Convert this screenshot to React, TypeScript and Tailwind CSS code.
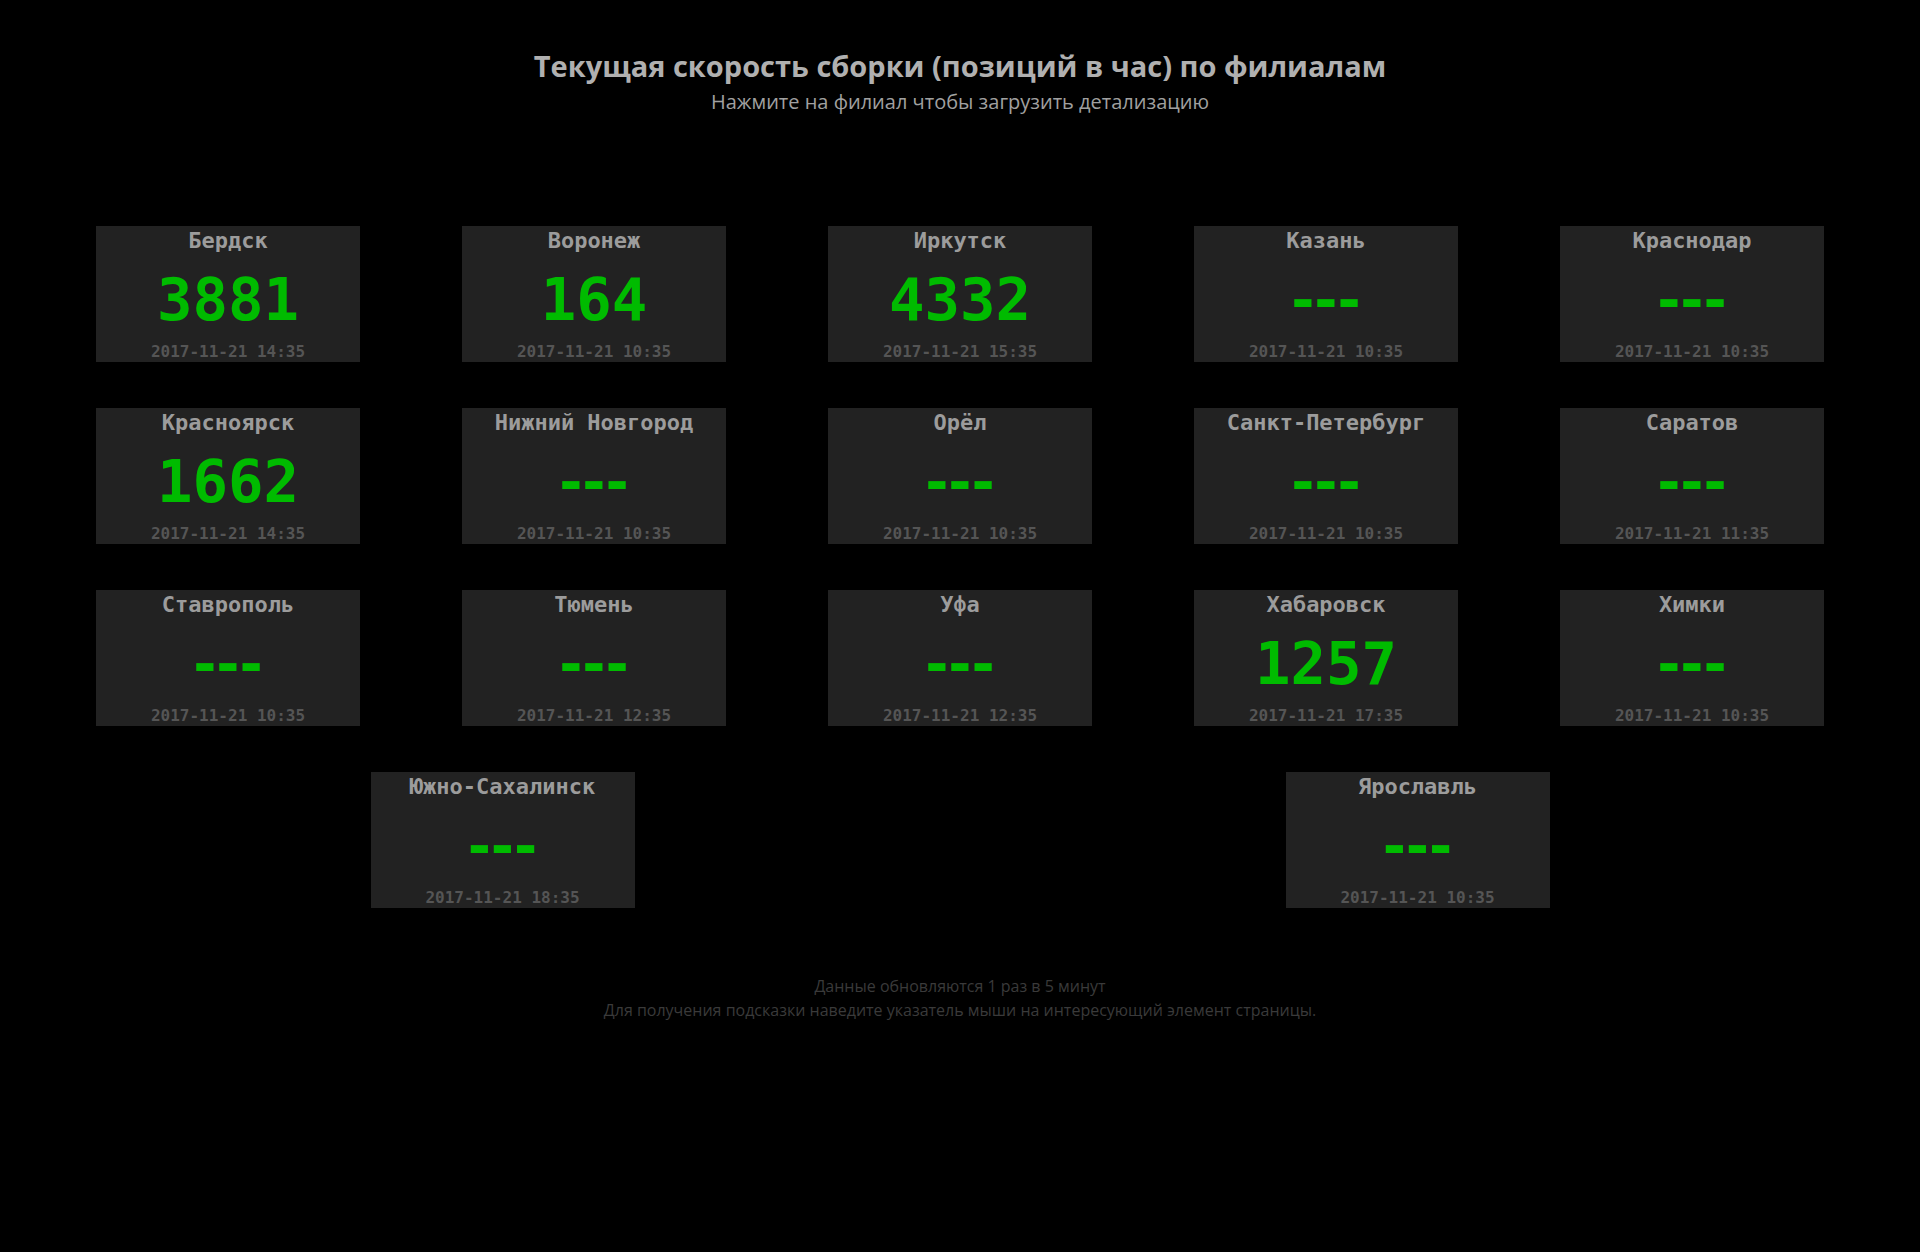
import React from 'react'

type Branch = {
    name: string
    speed: number | null
    updated: string
}

const branches: Branch[] = [
    { name: 'Бердск', speed: 3881, updated: '2017-11-21 14:35' },
    { name: 'Воронеж', speed: 164, updated: '2017-11-21 10:35' },
    { name: 'Иркутск', speed: 4332, updated: '2017-11-21 15:35' },
    { name: 'Казань', speed: null, updated: '2017-11-21 10:35' },
    { name: 'Краснодар', speed: null, updated: '2017-11-21 10:35' },
    { name: 'Красноярск', speed: 1662, updated: '2017-11-21 14:35' },
    { name: 'Нижний Новгород', speed: null, updated: '2017-11-21 10:35' },
    { name: 'Орёл', speed: null, updated: '2017-11-21 10:35' },
    { name: 'Санкт-Петербург', speed: null, updated: '2017-11-21 10:35' },
    { name: 'Саратов', speed: null, updated: '2017-11-21 11:35' },
    { name: 'Ставрополь', speed: null, updated: '2017-11-21 10:35' },
    { name: 'Тюмень', speed: null, updated: '2017-11-21 12:35' },
    { name: 'Уфа', speed: null, updated: '2017-11-21 12:35' },
    { name: 'Хабаровск', speed: 1257, updated: '2017-11-21 17:35' },
    { name: 'Химки', speed: null, updated: '2017-11-21 10:35' },
    { name: 'Южно-Сахалинск', speed: null, updated: '2017-11-21 18:35' },
    { name: 'Ярославль', speed: null, updated: '2017-11-21 10:35' },
]

function BranchCard({ branch }: { branch: Branch }) {
    return (
        <div
            className="w-[264px] h-[136px] mx-[51px] bg-[#222222] flex flex-col items-center pt-[3px] cursor-pointer font-['DejaVu_Sans_Mono',monospace] font-bold"
            title={`Детализация: ${branch.name}`}
        >
            <p className="text-[22px] leading-[24px] text-[#9c9c9c] whitespace-nowrap">{branch.name}</p>
            {branch.speed !== null ? (
                <p className="mt-[17px] text-[59px] leading-[59px] text-[#00bb00]">{branch.speed}</p>
            ) : (
                <p className="mt-[17px] text-[56px] leading-[59px] text-[#00bb00] font-['DejaVu_Sans',sans-serif]">---</p>
            )}
            <p className="mt-[15px] text-[16px] leading-[16px] text-[#555555]">{branch.updated}</p>
        </div>
    )
}

export default function App() {
    return (
        <div className="min-h-[1252px] bg-black font-['Open_Sans',sans-serif]">
            <div className="pt-[48px] text-center">
                <h1 className="text-[29px] leading-[36px] font-bold text-[#b0b0b0]">
                    Текущая скорость сборки (позиций в час) по филиалам
                </h1>
                <p className="mt-[6px] text-[20px] leading-[24px] text-[#a0a0a0]">
                    Нажмите на филиал чтобы загрузить детализацию
                </p>
            </div>

            <div className="w-[1830px] mx-auto mt-[112px] flex flex-wrap justify-around gap-y-[46px]">
                {branches.map((branch) => (
                    <BranchCard key={branch.name} branch={branch} />
                ))}
            </div>

            <div className="mt-[66px] text-center text-[16px] leading-[24px] text-[#3a3a3a]">
                <p>Данные обновляются 1 раз в 5 минут</p>
                <p>Для получения подсказки наведите указатель мыши на интересующий элемент страницы.</p>
            </div>
        </div>
    )
}
